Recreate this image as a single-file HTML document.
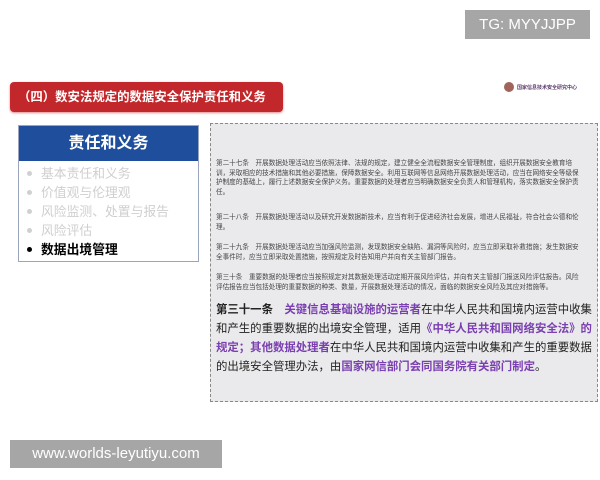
<!DOCTYPE html>
<html><head><meta charset="utf-8"><style>
*{margin:0;padding:0;box-sizing:border-box}
body{width:600px;height:480px;background:#fff;position:relative;overflow:hidden;font-family:"Liberation Sans","Noto Sans CJK SC",sans-serif}
.tg{position:absolute;left:465px;top:10px;width:125px;height:29px;background:#a6a6a6;color:#fff;font-size:15px;line-height:29px;text-align:center}
.www{position:absolute;left:10px;top:440px;width:212px;height:28px;background:#a6a6a6;color:#fff;font-size:15px;line-height:28px;text-align:center}
.title{position:absolute;left:10px;top:82px;width:273px;height:30px;background:#c2282b;border-radius:4px;color:#fff;font-weight:bold;font-size:12.4px;line-height:30px;padding-left:8px;white-space:nowrap;box-shadow:0 1px 2px #d88}
.logo{position:absolute;left:504px;top:82px;font-size:5px;color:#5a3a6a;display:flex;align-items:center;gap:3px;font-weight:bold}
.logo i{width:10px;height:10px;border-radius:50%;background:#a0645a;display:block}
.left{position:absolute;left:18px;top:125px;width:181px;height:137px;border:1px solid #9aa6c0;background:#fff}
.left .h{background:#1f4f9c;height:35px;color:#fff;font-weight:bold;font-size:16px;line-height:35px;text-align:center}
.left ul{list-style:none;padding:3px 0 0 6px}
.left li{font-size:12.8px;line-height:19px;color:#cfcfcf;position:relative;padding-left:16px;white-space:nowrap}
.left li:before{content:"";position:absolute;left:2px;top:7px;width:5px;height:5px;border-radius:50%;background:#d0d0d0}
.left li.on{color:#000;font-weight:bold}
.left li.on:before{background:#000}
.box{position:absolute;left:210px;top:123px;width:388px;height:279px;background:#eaeaec;border:1px dashed #888}
.sm{position:absolute;left:5px;width:368px;font-size:6.6px;line-height:9.6px;color:#444}
.big{position:absolute;left:5px;top:177px;width:376px;font-size:11.4px;line-height:19px;color:#222}
.p{color:#7a3fb0;font-weight:bold}
</style></head><body>
<div class="tg">TG: MYYJJPP</div>
<div class="title">（四）数安法规定的数据安全保护责任和义务</div>
<div class="logo"><i></i>国家信息技术安全研究中心</div>
<div class="left"><div class="h">责任和义务</div>
<ul><li>基本责任和义务</li><li>价值观与伦理观</li><li>风险监测、处置与报告</li><li>风险评估</li><li class="on">数据出境管理</li></ul></div>
<div class="box">
<div class="sm" style="top:35px">第二十七条　开展数据处理活动应当依照法律、法规的规定，建立健全全流程数据安全管理制度，组织开展数据安全教育培训，采取相应的技术措施和其他必要措施，保障数据安全。利用互联网等信息网络开展数据处理活动，应当在网络安全等级保护制度的基础上，履行上述数据安全保护义务。重要数据的处理者应当明确数据安全负责人和管理机构，落实数据安全保护责任。</div>
<div class="sm" style="top:89px">第二十八条　开展数据处理活动以及研究开发数据新技术，应当有利于促进经济社会发展，增进人民福祉，符合社会公德和伦理。</div>
<div class="sm" style="top:119px">第二十九条　开展数据处理活动应当加强风险监测，发现数据安全缺陷、漏洞等风险时，应当立即采取补救措施；发生数据安全事件时，应当立即采取处置措施，按照规定及时告知用户并向有关主管部门报告。</div>
<div class="sm" style="top:149px">第三十条　重要数据的处理者应当按照规定对其数据处理活动定期开展风险评估，并向有关主管部门报送风险评估报告。风险评估报告应当包括处理的重要数据的种类、数量，开展数据处理活动的情况，面临的数据安全风险及其应对措施等。</div>
<div class="big"><b>第三十一条</b>　<span class="p">关键信息基础设施的运营者</span>在中华人民共和国境内运营中收集和产生的重要数据的出境安全管理，适用<span class="p">《中华人民共和国网络安全法》的规定；其他数据处理者</span>在中华人民共和国境内运营中收集和产生的重要数据的出境安全管理办法，由<span class="p">国家网信部门会同国务院有关部门制定</span>。</div>
</div>
<div class="www">www.worlds-leyutiyu.com</div>
</body></html>
